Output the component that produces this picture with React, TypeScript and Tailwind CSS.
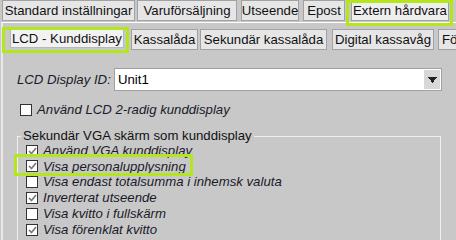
const topTabs = [
  { label: "Standard inställningar", w: "w-[133px]", ml: "ml-[2px]" },
  { label: "Varuförsäljning", w: "w-[100px]", ml: "ml-[2px]" },
  { label: "Utseende", w: "w-[58px]", ml: "ml-[4px]" },
  { label: "Epost", w: "w-[42px]", ml: "ml-[4px]" },
];

const subTabs = [
  { label: "Kassalåda", w: "w-[67px]", ml: "ml-[1px]" },
  { label: "Sekundär kassalåda", w: "w-[127px]", ml: "ml-[2px]" },
  { label: "Digital kassavåg", w: "w-[102px]", ml: "ml-[5px]" },
];

const vgaOptions = [
  { label: "Använd VGA kunddisplay", checked: true },
  { label: "Visa personalupplysning", checked: true },
  { label: "Visa endast totalsumma i inhemsk valuta", checked: false },
  { label: "Inverterat utseende", checked: true },
  { label: "Visa kvitto i fullskärm", checked: false },
  { label: "Visa förenklat kvitto", checked: true },
];

function Tab({ label, className }: { label: string; className: string }) {
  return (
    <div
      className={`flex shrink-0 items-center justify-center whitespace-nowrap border border-[#a2a2a2] bg-[#e6e6e6] ${className}`}
    >
      {label}
    </div>
  );
}

function CheckBox({ checked }: { checked: boolean }) {
  return (
    <div className="flex h-[12px] w-[12px] shrink-0 items-center justify-center border border-[#333] bg-white">
      {checked && (
        <svg width="9" height="8" viewBox="0 0 9 8">
          <path d="M1 4 L3.5 6.5 L8 1" fill="none" stroke="#7a7a7a" strokeWidth="1.7" />
        </svg>
      )}
    </div>
  );
}

export default function App() {
  return (
    <div className="relative h-[240px] w-[456px] overflow-hidden bg-[#c8c8c8] font-['Liberation_Sans',Arial,sans-serif] text-[13.2px] text-[#111]">
      {/* top tab row */}
      <div className="flex h-[22px] items-start">
        {topTabs.map((t) => (
          <Tab key={t.label} label={t.label} className={`h-[21px] ${t.w} ${t.ml}`} />
        ))}
        <Tab label="Extern hårdvara" className="ml-[6px] h-[21px] w-[98px] bg-[#efefef]" />
      </div>

      {/* panel */}
      <div className="ml-[1px] flex h-[218px] flex-col border-l-2 border-t border-l-[#e8e8e8] border-t-white pl-[1px]">
        <div className="mt-[6px] flex h-[21px] items-start">
          <Tab label="LCD - Kunddisplay" className="ml-[6px] h-[19px] w-[114px] border-[#b8b8b8] bg-[#f2f2f2]" />
          <div className="ml-[6px] flex">
            {subTabs.map((t) => (
              <Tab key={t.label} label={t.label} className={`h-[21px] ${t.w} ${t.ml}`} />
            ))}
            <div className="ml-[4px] flex h-[21px] w-[40px] shrink-0 items-center whitespace-nowrap border border-[#a2a2a2] bg-[#e6e6e6] pl-[3px]">
              Fö
            </div>
          </div>
        </div>

        <div className="flex flex-col pl-[13px]">
          <div className="mt-[18px] flex items-center">
            <span className="w-[97px] italic text-[#1a1a2a]">LCD Display ID:</span>
            <div className="flex h-[23px] w-[328px] items-center border border-[#a0a0a0] bg-white p-[1px]">
              <span className="flex-1 pl-[2px] text-[#000]">Unit1</span>
              <div className="flex h-full w-[16px] items-center justify-center bg-[#d8d8d8]">
                <svg width="9" height="6" viewBox="0 0 9 6">
                  <path d="M0 0 H9 V1 H8 V2 H7 V3 H6 V5 H5 V6 H4 V5 H3 V3 H2 V2 H1 V1 H0 Z" fill="#222" />
                </svg>
              </div>
            </div>
          </div>

          <div className="mt-[9px] flex items-center gap-[5px] pl-[3px]">
            <CheckBox checked={false} />
            <span className="italic text-[#1a1a2a]">Använd LCD 2-radig kunddisplay</span>
          </div>

          <div className="relative mt-[16px] h-[120px] w-[424px] border-l border-r border-t border-[#f0f0f0] pl-[8px] pt-[6px]">
            <span className="absolute -top-[9px] left-[3px] bg-[#c8c8c8] px-[2px] leading-[16px]">
              Sekundär VGA skärm som kunddisplay
            </span>
            <div className="flex flex-col">
              {vgaOptions.map((o) => (
                <div key={o.label} className="flex h-[15.8px] items-center gap-[5px]">
                  <CheckBox checked={o.checked} />
                  <span className="italic leading-[16px] text-[#1a1a2a]">{o.label}</span>
                </div>
              ))}
            </div>
          </div>
        </div>
      </div>

      {/* annotation highlights */}
      <div className="absolute left-[346px] top-0 h-[26px] w-[107px] border-[3px] border-[#b4e61e]" />
      <div className="absolute left-[2px] top-[27px] h-[26px] w-[127px] border-[3px] border-[#b4e61e]" />
      <div className="absolute left-[14px] top-[154px] h-[22px] w-[179px] border-[3px] border-[#b4e61e]" />
    </div>
  );
}
